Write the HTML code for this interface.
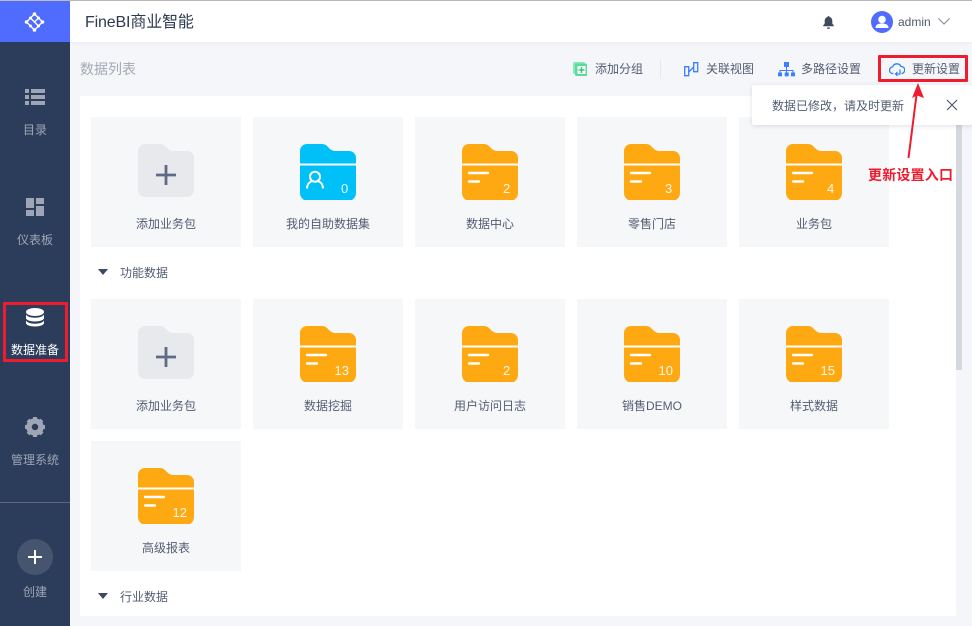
<!DOCTYPE html>
<html lang="zh"><head><meta charset="utf-8"><style>
html,body{margin:0;padding:0}
body{width:972px;height:626px;overflow:hidden;position:relative;background:#f5f6f9;font-family:"Liberation Sans","Noto Sans CJK SC",sans-serif;color:#4f5a70}
.a{position:absolute;white-space:nowrap}
.nav{position:absolute;left:0;width:70px;text-align:center;font-size:12px;line-height:16px;color:#9ea6b5}
.card{position:absolute;width:150px;height:130px;background:#f6f7f9}
.card svg{position:absolute;left:47px;top:27px}
.card svg text{font-family:"Liberation Sans",sans-serif;font-size:13px;fill:#fff;fill-opacity:.92}
.card span{position:absolute;left:0;right:0;top:99px;text-align:center;font-size:12px;line-height:16px;color:#535d72}
.sec{position:absolute;left:120px;font-size:12px;line-height:16px;color:#535d72}
.tri{position:absolute;left:98px;width:0;height:0;border-left:5px solid transparent;border-right:5px solid transparent;border-top:6px solid #3d4963}
.tool{position:absolute;top:61px;font-size:12px;line-height:16px;color:#535d72;white-space:nowrap}
</style></head><body>
<svg width="0" height="0" style="position:absolute"><defs>
<path id="f" d="M0 7a7 7 0 0 1 7-7h15q3 0 5 2l2.500 2.500q2.500 2.500 6 2.500h13.500a7 7 0 0 1 7 7v35a8 8 0 0 1-8 8h-40a8 8 0 0 1-8-8z"/>
<g id="y"><use href="#f" fill="#ffa912"/><path d="M0 20.500h56" stroke="#fff" stroke-width="2"/><path d="M7 29h19M7 37.500h10" stroke="#fff" stroke-width="2.400" stroke-linecap="round"/></g>
<g id="g"><path d="M0 7a7 7 0 0 1 7-7h15q3 0 5 2l2.500 2.500q2.500 2.500 6 2.500h13.500a7 7 0 0 1 7 7v32a7 7 0 0 1-7 7h-42a7 7 0 0 1-7-7z" fill="#e8e9ed"/><path d="M28 21v20M18 31h20" stroke="#5f6b82" stroke-width="2.800"/></g>
</defs></svg>

<div class="a" style="left:0;top:0;width:972px;height:1px;background:#bcbcbc"></div>
<div class="a" style="left:70px;top:1px;width:902px;height:41px;background:#fff;box-shadow:0 1px 4px rgba(40,50,80,.06)"></div>
<div class="a" style="left:0;top:1px;width:70px;height:625px;background:#2c3d5b"></div>
<div class="a" style="left:0;top:1px;width:70px;height:41px;background:#4f6cff"></div>
<svg class="a" style="left:24px;top:11px" width="22" height="22" viewBox="0 0 22 22"><path d="M10.500 3L2.500 11l8 8 8-8zM6.500 7l8 8M14.500 7l-4 4" fill="none" stroke="#fff" stroke-width="1.400"/><g fill="#fff"><circle cx="10.500" cy="3" r="1.800"/><circle cx="2.500" cy="11" r="1.800"/><circle cx="10.500" cy="19" r="1.800"/><circle cx="18.500" cy="11" r="1.800"/><circle cx="6.500" cy="7" r="1.500"/><circle cx="14.500" cy="15" r="1.500"/><circle cx="6.500" cy="15" r="1.500"/><circle cx="14.500" cy="7" r="1.500"/></g></svg>
<div class="a" style="left:85px;top:12px;font-size:16px;line-height:22px;color:#2e3a50;letter-spacing:-.15px">FineBI商业智能</div>

<svg class="a" style="left:822px;top:15px" width="13" height="14" viewBox="0 0 13 14"><path d="M6.500 1a1 1 0 0 1 1 1c2 .5 2.800 2 2.800 4v2.500l1.500 2v.8H1.200v-.8l1.500-2V6c0-2 .8-3.500 2.800-4a1 1 0 0 1 1-1zM5 12.500h3a1.500 1.500 0 0 1-3 0z" fill="#3f4a5e"/></svg>
<svg class="a" style="left:871px;top:11px" width="22" height="22" viewBox="0 0 22 22"><circle cx="11" cy="11" r="11" fill="#4f6cff"/><circle cx="11" cy="8.500" r="3.800" fill="#fff"/><path d="M4.500 17c0-3.200 2.500-4.500 6.500-4.500s6.500 1.300 6.500 4.500z" fill="#fff"/></svg>
<div class="a" style="left:898px;top:14px;font-size:12px;line-height:16px;color:#4f5a70">admin</div>
<svg class="a" style="left:937px;top:17px" width="14" height="9" viewBox="0 0 14 9"><path d="M1.500 1.500L7 7l5.500-5.500" fill="none" stroke="#7b8496" stroke-width="1"/></svg>

<div class="a" style="left:80px;top:60px;font-size:14px;line-height:18px;color:#a4a9b3">数据列表</div>

<svg class="a" style="left:573px;top:62px" width="15" height="15" viewBox="0 0 15 15"><rect x="0" y="0" width="12" height="12" rx="1.500" fill="#8ae9bb"/><rect x="2" y="1.500" width="12" height="12.500" rx="1.500" fill="#5adb9b"/><rect x="4.500" y="4" width="8" height="8" fill="#fff"/><path d="M8.500 5v6M5.500 8h6" stroke="#30c97e" stroke-width="1.500"/></svg>
<div class="tool" style="left:595px">添加分组</div>
<div class="a" style="left:660px;top:59px;width:1px;height:20px;background:#e6e8ec"></div>
<svg class="a" style="left:684px;top:62px" width="15" height="15" viewBox="0 0 15 15"><path d="M.7 4.700h4v9h-4zM9.700.7h4v9h-4zM4.700 10l5-5" fill="none" stroke="#3d7dff" stroke-width="1.300"/></svg>
<div class="tool" style="left:706px">关联视图</div>
<svg class="a" style="left:778px;top:61px" width="18" height="16" viewBox="0 0 18 16"><path d="M8.500 4v5M2 13v-3.500h13V13M8.500 9v4" fill="none" stroke="#3d7dff" stroke-width="1.100"/><rect x="6" y="1" width="5" height="5" fill="#3d7dff"/><rect x="0" y="11.500" width="4" height="3.800" fill="#3d7dff"/><rect x="6.700" y="11.500" width="4" height="3.800" fill="#3d7dff"/><rect x="13" y="11.500" width="4" height="3.800" fill="#3d7dff"/></svg>
<div class="tool" style="left:801px">多路径设置</div>
<svg class="a" style="left:889px;top:61px" width="16" height="16" viewBox="0 0 16 16"><path d="M4.500 12.500H4a3.300 3.300 0 0 1-.4-6.600A4.500 4.500 0 0 1 12 5.500a3.500 3.500 0 0 1 .5 7" fill="none" stroke="#2f82f2" stroke-width="1.300"/><path d="M11 8.500v4.500H6.500M8.500 11L6.500 13l2 2" fill="none" stroke="#2f82f2" stroke-width="1.200"/></svg>
<div class="tool" style="left:912px">更新设置</div>
<div class="a" style="left:878px;top:55px;width:84px;height:21px;border:3px solid #ee1c2e;border-radius:1px"></div>

<div class="a" style="left:80px;top:96px;width:876px;height:520px;background:#fff"></div>
<div class="a" style="left:956px;top:125px;width:6px;height:245px;background:#d5d8de"></div>

<div class="card" style="left:91px;top:117px"><svg width="56" height="56"><use href="#g"/></svg><span>添加业务包</span></div>
<div class="card" style="left:253px;top:117px"><svg width="56" height="56"><use href="#f" fill="#00c1f7"/><path d="M0 20.500h56" stroke="#fff" stroke-width="2"/><circle cx="15" cy="32.700" r="5" fill="none" stroke="#fff" stroke-width="2"/><path d="M7 44.500c0-4 2.500-6.500 5-7.500M23 44.500c0-4-2.500-6.500-5-7.500" fill="none" stroke="#fff" stroke-width="2"/><text x="41" y="49">0</text></svg><span>我的自助数据集</span></div>
<div class="card" style="left:415px;top:117px"><svg width="56" height="56"><use href="#y"/><text x="41" y="49">2</text></svg><span>数据中心</span></div>
<div class="card" style="left:577px;top:117px"><svg width="56" height="56"><use href="#y"/><text x="41" y="49">3</text></svg><span>零售门店</span></div>
<div class="card" style="left:739px;top:117px"><svg width="56" height="56"><use href="#y"/><text x="41" y="49">4</text></svg><span>业务包</span></div>

<div class="tri" style="top:269px"></div><div class="sec" style="top:265px">功能数据</div>

<div class="card" style="left:91px;top:299px"><svg width="56" height="56"><use href="#g"/></svg><span>添加业务包</span></div>
<div class="card" style="left:253px;top:299px"><svg width="56" height="56"><use href="#y"/><text x="34.500" y="49">13</text></svg><span>数据挖掘</span></div>
<div class="card" style="left:415px;top:299px"><svg width="56" height="56"><use href="#y"/><text x="41" y="49">2</text></svg><span>用户访问日志</span></div>
<div class="card" style="left:577px;top:299px"><svg width="56" height="56"><use href="#y"/><text x="34.500" y="49">10</text></svg><span>销售DEMO</span></div>
<div class="card" style="left:739px;top:299px"><svg width="56" height="56"><use href="#y"/><text x="34.500" y="49">15</text></svg><span>样式数据</span></div>
<div class="card" style="left:91px;top:441px"><svg width="56" height="56"><use href="#y"/><text x="34.500" y="49">12</text></svg><span>高级报表</span></div>

<div class="tri" style="top:593px"></div><div class="sec" style="top:589px">行业数据</div>

<!-- sidebar -->
<svg class="a" style="left:25px;top:89px" width="20" height="16" viewBox="0 0 20 16" fill="#9ea6b5"><rect x="0" y="0" width="4" height="4"/><rect x="6" y="0" width="14" height="4"/><rect x="0" y="6" width="4" height="4"/><rect x="6" y="6" width="14" height="4"/><rect x="0" y="12" width="4" height="4"/><rect x="6" y="12" width="14" height="4"/></svg>
<div class="nav" style="top:122px">目录</div>
<svg class="a" style="left:26px;top:198px" width="18" height="18" viewBox="0 0 18 18" fill="#9ea6b5"><rect width="8" height="10"/><rect x="10" width="8" height="6"/><rect y="12" width="8" height="6"/><rect x="10" y="8" width="8" height="10"/></svg>
<div class="nav" style="top:232px">仪表板</div>
<svg class="a" style="left:26px;top:308px" width="18" height="19" viewBox="0 0 18 19" fill="#fff"><ellipse cx="9" cy="4" rx="9" ry="4"/><path d="M0 6.500c1 2 4.500 3.200 9 3.200s8-1.200 9-3.200V10c0 2-4 3.500-9 3.500S0 12 0 10z"/><path d="M0 12.500c1 2 4.500 3.200 9 3.200s8-1.200 9-3.200v2.500c0 2-4 3.500-9 3.500S0 17 0 15z"/></svg>
<div class="nav" style="top:342px;color:#fff">数据准备</div>
<div class="a" style="left:3px;top:302px;width:59px;height:54px;border:3px solid #ee1c2e"></div>
<svg class="a" style="left:25px;top:417px" width="20" height="20" viewBox="0 0 20 20"><circle cx="10" cy="10" r="6" fill="none" stroke="#9ea6b5" stroke-width="5.500"/><g stroke="#9ea6b5" stroke-width="4"><path d="M10 0v4M10 16v4M0 10h4M16 10h4M3 3l2.500 2.500M14.500 14.500L17 17M17 3l-2.500 2.500M5.500 14.500L3 17"/></g></svg>
<div class="nav" style="top:452px">管理系统</div>
<div class="a" style="left:0;top:502px;width:70px;height:1px;background:#5a6980"></div>
<div class="a" style="left:17px;top:539px;width:36px;height:36px;border-radius:50%;background:#46556f"></div>
<svg class="a" style="left:28px;top:550px" width="14" height="14" viewBox="0 0 14 14"><path d="M7 0v14M0 7h14" stroke="#fff" stroke-width="2"/></svg>
<div class="nav" style="top:584px">创建</div>

<!-- toast -->
<div class="a" style="left:752px;top:85px;width:220px;height:40px;background:#fff;border-radius:2px;box-shadow:0 1px 5px rgba(40,50,80,.15)"></div>
<div class="a" style="left:772px;top:98px;font-size:12px;line-height:16px;color:#535d72">数据已修改，请及时更新</div>
<svg class="a" style="left:946px;top:99px" width="12" height="12" viewBox="0 0 12 12"><path d="M1 1l10 10M11 1L1 11" stroke="#4f5a70" stroke-width="1.200"/></svg>

<!-- arrow -->
<svg class="a" style="left:900px;top:80px" width="30" height="82" viewBox="0 0 30 82"><path d="M8.500 78L16.500 15" stroke="#ee1c2e" stroke-width="2" fill="none"/><path d="M18 3L12 18l5-2.500 7 2.500z" fill="#ee1c2e"/></svg>
<div class="a" style="left:868px;top:166px;font-size:14px;line-height:18px;font-weight:bold;color:#ee1c2e;letter-spacing:.2px">更新设置入口</div>
</body></html>
